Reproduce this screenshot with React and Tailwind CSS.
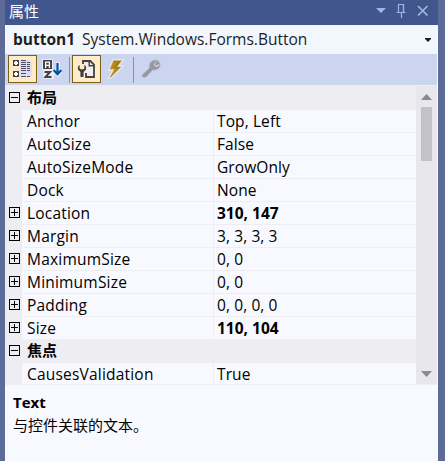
import React from "react";

const LATIN = "font-['Open_Sans','Noto_Sans_CJK_SC',sans-serif]";
const CJK = "font-['Noto_Sans_CJK_SC',sans-serif]";

const LAYOUT = [
  { name: "Anchor", value: "Top, Left" },
  { name: "AutoSize", value: "False" },
  { name: "AutoSizeMode", value: "GrowOnly" },
  { name: "Dock", value: "None" },
  { name: "Location", value: "310, 147", expand: true, bold: true },
  { name: "Margin", value: "3, 3, 3, 3", expand: true },
  { name: "MaximumSize", value: "0, 0", expand: true },
  { name: "MinimumSize", value: "0, 0", expand: true },
  { name: "Padding", value: "0, 0, 0, 0", expand: true },
  { name: "Size", value: "110, 104", expand: true, bold: true },
];

function Toggle({ open }) {
  return (
    <svg width="11" height="11" viewBox="0 0 11 11" fill="none" stroke="#000" shapeRendering="crispEdges">
      <rect x="0.5" y="0.5" width="10" height="10" />
      <path d={open ? "M2 5.5h7" : "M2 5.5h7M5.5 2v7"} />
    </svg>
  );
}

function Category({ label }) {
  return (
    <div className="flex h-[23px] shrink-0 items-start bg-[#eeedf2] pt-[5px] pl-1">
      <Toggle open />
      <span className={`${CJK} -mt-1 ml-[7px] text-[15px] leading-[17px] font-bold`}>{label}</span>
    </div>
  );
}

function Row({ name, value, expand, bold }) {
  return (
    <div className="flex h-[23px] shrink-0">
      <div className="w-[17px] shrink-0 bg-[#eeedf2] pt-[5px] pl-1">{expand && <Toggle />}</div>
      <div className="flex w-[192px] shrink-0 items-center border-r border-b border-[#eeedf2] pt-0.5 pl-[5px] text-[15.5px] leading-none tracking-[0.2px]">
        {name}
      </div>
      <div
        className={`flex flex-1 items-center border-b border-[#eeedf2] pt-0.5 pl-[3px] text-[15.5px] leading-none ${bold ? "font-bold" : "tracking-[0.1px]"}`}
      >
        {value}
      </div>
    </div>
  );
}

function ToolButton({ active, children }) {
  return (
    <div
      className={`flex h-7 w-[29px] shrink-0 items-center justify-center ${active ? "border border-[#7f5f14] bg-[#ffecc6]" : ""}`}
    >
      {children}
    </div>
  );
}

function CategorizedIcon() {
  return (
    <svg className="-mt-px" width="21" height="20" viewBox="0 0 21 20" shapeRendering="crispEdges">
      <path fill="#dfdcef" d="M8 1h9v1h3v16H8z" />
      <path fill="#424242" d="M1 1h6v6H1zM1 12h6v6H1z" />
      <path fill="#fff" d="M2 3h4v2H2zM3 2h2v4H3zM2 14h4v2H2zM3 13h2v4H3z" />
      <path fill="#514f60" d="M9 1h5v1H9zM9 3h5v1H9zM15 3h3v1h-3zM9 5h5v1H9zM15 5h3v1h-3zM9 7h5v1H9zM15 7h3v1h-3zM9 9h5v1H9zM15 9h3v1h-3zM9 11h5v1H9zM15 11h3v1h-3zM9 14h5v1H9zM9 17h5v1H9zM15 17h3v1h-3z" />
    </svg>
  );
}

function SortIcon() {
  return (
    <svg width="20" height="20" viewBox="0 0 20 20">
      <path fill="#eff1f7" fillOpacity=".8" d="M0 0h11v10h3V3h4v7h2v4l-4 4-4-3v5H1v-9H0z" />
      <path fill="#424242" d="M1 1h9v9H1z" />
      <path fill="none" stroke="#fff" strokeWidth="1.3" d="M3.6 9V3.2h3.8V9M3.6 6.4h3.8" />
      <path fill="none" stroke="#424242" strokeWidth="2" d="M2.5 13H8L3.5 18h6" />
      <path fill="none" stroke="#00539c" strokeWidth="2.2" d="M15.5 4v11M11.6 11l3.9 4.2 3.9-4.2" />
    </svg>
  );
}

function PropertiesIcon() {
  return (
    <svg width="20" height="20" viewBox="0 0 20 20">
      <path fill="#f1edf0" d="M7 2h6.5L17 5.5V18H9V12z" />
      <path fill="none" stroke="#424242" strokeWidth="1.8" d="M6 5V2h7.3L17 5.7V18H9v-4" />
      <path fill="none" stroke="#424242" strokeWidth="1.4" d="M12.2 2.5v4.3H17" />
      <path
        fill="#424242"
        stroke="#fff3df"
        strokeWidth="1"
        paintOrder="stroke"
        d="M2.6 5.8.9 7.4v3.2l2.5 2.5v5h3.2v-5l2.5-2.5V7.4L7.4 5.8v3.4L6.2 10.2H3.8L2.6 9.2z"
      />
    </svg>
  );
}

function BoltIcon() {
  return (
    <svg width="20" height="20" viewBox="0 0 20 20">
      <path
        fill="#b98d1d"
        stroke="#e6e6ea"
        strokeWidth="1.5"
        d="M7 .8h10.5L12.7 7H17L5 19.2H2.5L7 11H2.7z"
      />
      <path fill="#87731f" d="M8 2h7L10 8h4l-4.5 4.5L11 9H7l4-6H8z" opacity=".6" />
    </svg>
  );
}

function WrenchIcon() {
  return (
    <svg width="20" height="20" viewBox="0 0 20 20">
      <path
        fill="#9697a1"
        stroke="#c4c9d9"
        strokeWidth="1"
        d="M1.2 15.5 8.2 9C7.3 4.6 10.3.8 14.3.8c3 0 5 2.2 5 5 0 3.9-3.4 6-7.4 5.2l-6.6 7.2c-2.2 1.6-5.5-.6-4.1-2.7z"
      />
      <path fill="#d8dbe6" d="m15.6 2.6-1.6 2 .3 1.6 1.6.3 2-1.7.3 1-1.8 2-2.6-.4-.8-2.4 1.6-2.4z" />
    </svg>
  );
}

function TitleBar() {
  return (
    <div className="flex h-[25px] shrink-0 items-start bg-[#40568d] pl-1">
      <span className={`${CJK} mt-0.5 text-[15px] leading-[18px] text-white`}>属性</span>
      <div className="ml-auto flex text-[#a5b4df]">
        <svg width="66" height="25" viewBox="0 0 66 25" fill="none" stroke="currentColor">
          <path fill="currentColor" stroke="none" d="M4 8h10l-5 5z" />
          <path strokeWidth="1.2" d="M26.5 12V4.5h5V12M24.5 12.5h9M29.5 12v6" />
          <path strokeWidth="1.2" d="M31.5 4v8" />
          <path strokeWidth="1.7" d="m46 6 9.5 9.5M55.5 6 46 15.5" />
        </svg>
      </div>
    </div>
  );
}

function ScrollBar() {
  return (
    <div className="flex w-[21px] shrink-0 flex-col items-center bg-[#e8e7ec]">
      <svg className="mt-2 shrink-0" width="11" height="6" viewBox="0 0 11 6">
        <path fill="#868999" d="M5.5 0 11 6H0z" />
      </svg>
      <div className="mt-[7px] h-[54px] w-[11px] shrink-0 bg-[#c2c3c9]" />
      <svg className="mt-auto mb-[7px] shrink-0" width="11" height="6" viewBox="0 0 11 6">
        <path fill="#868999" d="M5.5 6 0 0h11z" />
      </svg>
    </div>
  );
}

export default function App() {
  return (
    <div className={`${LATIN} flex h-[461px] w-[445px] flex-col overflow-hidden bg-[#5d6b99] pr-[7px] pl-[5px] whitespace-nowrap text-black`}>
      <TitleBar />
      <div className="flex min-h-0 flex-1 flex-col bg-[#f7f9fe] pr-px">
        <div className="flex h-[29px] shrink-0 items-center bg-[#f2f6fd] pt-px pl-2 text-[15.5px] leading-none text-[#1e1e1e]">
          <span className="font-bold">button1</span>
          <span className="ml-[7px]">System.Windows.Forms.Button</span>
          <svg className="mr-1.5 ml-auto" width="6" height="4" viewBox="0 0 6 4">
            <path fill="#1e1e1e" d="M0 0h6v1L3 4 0 1z" />
          </svg>
        </div>
        <div className="flex h-[31px] shrink-0 items-start bg-[#ccd5f0] pt-px pl-[3px]">
          <ToolButton active><CategorizedIcon /></ToolButton>
          <ToolButton><SortIcon /></ToolButton>
          <div className="mt-0.5 mr-[2px] ml-[3px] h-[26px] w-px bg-[#8591bb]" />
          <ToolButton active><PropertiesIcon /></ToolButton>
          <ToolButton><BoltIcon /></ToolButton>
          <div className="mt-0.5 mr-[2px] ml-[3px] h-[26px] w-px bg-[#8591bb]" />
          <ToolButton><WrenchIcon /></ToolButton>
        </div>
        <div className="flex h-[300px] shrink-0 border-y border-[#eeedf2]">
          <div className="flex min-w-0 flex-1 flex-col overflow-hidden bg-[#f7f9fe]">
            <div className="bg-[#eeedf2] pt-px"><Category label="布局" /></div>
            {LAYOUT.map((r) => <Row key={r.name} {...r} />)}
            <Category label="焦点" />
            <Row name="CausesValidation" value="True" />
          </div>
          <ScrollBar />
        </div>
        <div className="flex flex-col pt-[7px] pl-2">
          <span className="text-[15px] leading-5 font-bold">Text</span>
          <span className={`${CJK} mt-0.5 text-[15px] leading-[22px]`}>与控件关联的文本。</span>
        </div>
      </div>
    </div>
  );
}
